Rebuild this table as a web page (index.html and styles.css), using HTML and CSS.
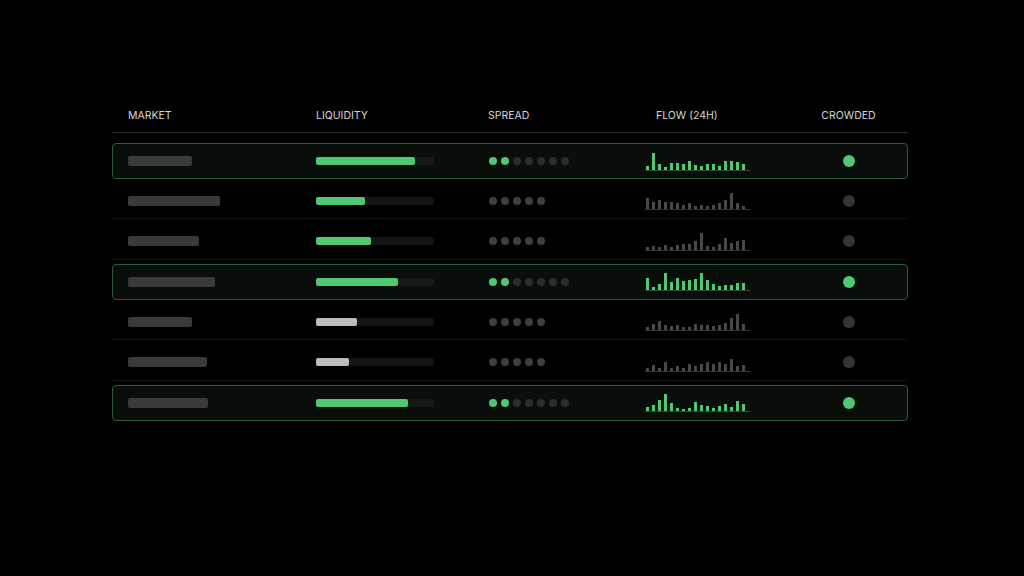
FILE: index.html
```html
<!DOCTYPE html>
<html>
<head>
<meta charset="utf-8">
<link rel="stylesheet" href="styles.css">
</head>
<body>
<div class="table">
  <div class="head">
    <div class="hc">MARKET</div>
    <div class="hc">LIQUIDITY</div>
    <div class="hc">SPREAD</div>
    <div class="hc flowh">FLOW (24H)</div>
    <div class="hc center">CROWDED</div>
  </div>
  <div class="body">
    <div class="row hot">
      <div><div class="name" style="width:64px"></div></div>
      <div class="track"><div class="fill g" style="width:99px"></div></div>
      <div class="dots"><i class="g"></i><i class="g"></i><i></i><i></i><i></i><i></i><i></i></div>
      <div class="spark" data-h="4,17,6,3,7,7,6,9,5,4,6,6,4,9,9,8,6"></div>
      <div class="crowd"><span class="dot g"></span></div>
    </div>
    <div class="row">
      <div><div class="name" style="width:92px"></div></div>
      <div class="track"><div class="fill g" style="width:49px"></div></div>
      <div class="dots"><i></i><i></i><i></i><i></i><i></i></div>
      <div class="spark" data-h="11,7,9,7,7,6,4,6,3,4,3,4,6,9,16,6,3"></div>
      <div class="crowd"><span class="dot"></span></div>
    </div>
    <div class="row">
      <div><div class="name" style="width:71px"></div></div>
      <div class="track"><div class="fill g" style="width:55px"></div></div>
      <div class="dots"><i></i><i></i><i></i><i></i><i></i></div>
      <div class="spark" data-h="3,4,3,5,3,5,6,6,9,17,4,3,6,12,7,9,10"></div>
      <div class="crowd"><span class="dot"></span></div>
    </div>
    <div class="row hot">
      <div><div class="name" style="width:87px"></div></div>
      <div class="track"><div class="fill g" style="width:82px"></div></div>
      <div class="dots"><i class="g"></i><i class="g"></i><i></i><i></i><i></i><i></i><i></i></div>
      <div class="spark" data-h="12,3,6,17,8,12,9,10,11,17,10,6,4,5,5,7,7"></div>
      <div class="crowd"><span class="dot g"></span></div>
    </div>
    <div class="row">
      <div><div class="name" style="width:64px"></div></div>
      <div class="track"><div class="fill w" style="width:41px"></div></div>
      <div class="dots"><i></i><i></i><i></i><i></i><i></i></div>
      <div class="spark" data-h="3,6,9,5,4,5,3,3,6,5,5,4,5,7,12,16,6"></div>
      <div class="crowd"><span class="dot"></span></div>
    </div>
    <div class="row">
      <div><div class="name" style="width:79px"></div></div>
      <div class="track"><div class="fill w" style="width:33px"></div></div>
      <div class="dots"><i></i><i></i><i></i><i></i><i></i></div>
      <div class="spark" data-h="3,6,3,9,3,5,3,7,5,7,9,7,9,7,12,5,6"></div>
      <div class="crowd"><span class="dot"></span></div>
    </div>
    <div class="row hot">
      <div><div class="name" style="width:80px"></div></div>
      <div class="track"><div class="fill g" style="width:92px"></div></div>
      <div class="dots"><i class="g"></i><i class="g"></i><i></i><i></i><i></i><i></i><i></i></div>
      <div class="spark" data-h="4,6,11,17,8,3,2,3,9,6,5,3,5,7,4,10,7"></div>
      <div class="crowd"><span class="dot g"></span></div>
    </div>
  </div>
</div>
<script>
document.querySelectorAll('.spark').forEach(function(s){
  s.getAttribute('data-h').split(',').forEach(function(h){
    var b=document.createElement('span');
    b.style.height=h+'px';
    s.appendChild(b);
  });
});
</script>
</body>
</html>
```
FILE: styles.css
```css
html, body {
  margin: 0;
  padding: 0;
  background: #000;
  width: 1024px;
  height: 576px;
  overflow: hidden;
  font-family: Inter, "Liberation Sans", sans-serif;
}
.table {
  width: 796px;
  margin: 0 0 0 112px;
  padding-top: 108px;
}
.head {
  display: grid;
  grid-template-columns: 188px 172px 158px 143px 119px;
  padding-left: 16px;
  height: 24px;
  align-items: start;
  border-bottom: 1px solid #2a2a2a;
}
.hc {
  font-size: 10.5px;
  line-height: 16px;
  color: #d6d6d6;
  letter-spacing: 0;
}
.flowh { padding-left: 10px; }
.center { text-align: center; }
.body {
  display: flex;
  flex-direction: column;
  gap: 4.33px;
  padding-top: 10px;
}
.row {
  display: grid;
  grid-template-columns: 188px 172px 158px 143px 119px;
  align-items: center;
  height: 36px;
  box-sizing: border-box;
  padding-left: 16px;
  border-bottom: 1px solid #121212;
}
.row.hot {
  border: 1px solid #2b5c37;
  border-radius: 4px;
  background: #0a0e0b;
  padding-left: 15px;
}
.name {
  height: 10px;
  border-radius: 2px;
  background: #3a3a3a;
}
.track {
  width: 118px;
  height: 8px;
  border-radius: 2px;
  background: #141414;
}
.hot .track { background: #161a17; }
.fill {
  height: 8px;
  border-radius: 2px;
}
.fill.g { background: #4fc874; }
.fill.w { background: #bcbcbc; }
.dots {
  display: flex;
  gap: 4px;
  padding-left: 1px;
}
.dots i {
  width: 8px;
  height: 8px;
  border-radius: 50%;
  background: #3e3e3e;
}
.hot .dots i { background: #2a2d2b; }
.dots i.g, .hot .dots i.g { background: #4fc874; }
.spark {
  display: flex;
  align-items: flex-end;
  gap: 3px;
  width: 101px;
  height: 18px;
  padding: 0 3px 0 1px;
  border-bottom: 1px solid #333;
  box-sizing: content-box;
  margin-left: -1px;
}
.spark span {
  width: 3px;
  background: #484848;
}
.hot .spark { border-bottom-color: #34473a; }
.hot .spark span { background: #4fc874; }
.crowd {
  display: flex;
  justify-content: center;
}
.dot {
  width: 12px;
  height: 12px;
  border-radius: 50%;
  background: #353535;
}
.dot.g { background: #4fc874; }
```
